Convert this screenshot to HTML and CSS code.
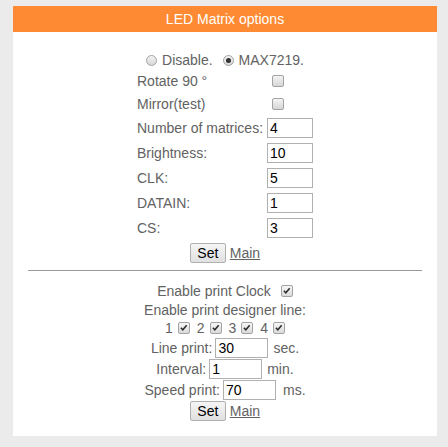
FILE: index.html
```html
<!DOCTYPE html>
<html>
<head>
<meta charset="utf-8">
<link rel="stylesheet" href="styles.css">
</head>
<body>
<div class="card">
  <div class="head">LED Matrix options</div>
  <div class="radios">
    <span class="radio"></span><span class="rtext">Disable.</span>
    <span class="radio on"></span><span class="rtext">MAX7219.</span>
  </div>
  <div class="grid">
    <span class="lbl">Rotate 90 °</span><span class="cell"><span class="cbx"></span></span>
    <span class="lbl">Mirror(test)</span><span class="cell"><span class="cbx"></span></span>
    <span class="lbl">Number of matrices:</span><span class="cell"><span class="inp">4</span></span>
    <span class="lbl">Brightness:</span><span class="cell"><span class="inp">10</span></span>
    <span class="lbl">CLK:</span><span class="cell"><span class="inp">5</span></span>
    <span class="lbl">DATAIN:</span><span class="cell"><span class="inp">1</span></span>
    <span class="lbl">CS:</span><span class="cell"><span class="inp">3</span></span>
  </div>
  <div class="actions first">
    <span class="btn">Set</span><a class="link">Main</a>
  </div>
  <div class="rule"></div>
  <div class="sec2">
    <div class="line t19">Enable print Clock<span class="cbx on gap10"><svg viewBox="0 0 12 12" width="10" height="10"><path d="M2.2 5.8 L4.6 8.2 L9.2 2.8" fill="none" stroke="#2b2b2b" stroke-width="1.8"/></svg></span></div>
    <div class="line t19">Enable print designer line:</div>
    <div class="line t18 nums">
      <span class="num">1</span><span class="cbx on"><svg viewBox="0 0 12 12" width="10" height="10"><path d="M2.2 5.8 L4.6 8.2 L9.2 2.8" fill="none" stroke="#2b2b2b" stroke-width="1.8"/></svg></span>
      <span class="num">2</span><span class="cbx on"><svg viewBox="0 0 12 12" width="10" height="10"><path d="M2.2 5.8 L4.6 8.2 L9.2 2.8" fill="none" stroke="#2b2b2b" stroke-width="1.8"/></svg></span>
      <span class="num">3</span><span class="cbx on"><svg viewBox="0 0 12 12" width="10" height="10"><path d="M2.2 5.8 L4.6 8.2 L9.2 2.8" fill="none" stroke="#2b2b2b" stroke-width="1.8"/></svg></span>
      <span class="num">4</span><span class="cbx on"><svg viewBox="0 0 12 12" width="10" height="10"><path d="M2.2 5.8 L4.6 8.2 L9.2 2.8" fill="none" stroke="#2b2b2b" stroke-width="1.8"/></svg></span>
    </div>
    <div class="line t21 field"><span>Line print:</span><span class="inp wide">30</span><span class="unit">sec.</span></div>
    <div class="line t21 field"><span>Interval:</span><span class="inp wide">1</span><span class="unit">min.</span></div>
    <div class="line t21 field"><span>Speed print:</span><span class="inp wide">70</span><span class="unit ms">ms.</span></div>
    <div class="actions second">
      <span class="btn">Set</span><a class="link">Main</a>
    </div>
  </div>
</div>
</body>
</html>
```

FILE: styles.css
```css
* { box-sizing: border-box; }
html, body {
  margin: 0;
  padding: 0;
  background: #ebebeb;
}
body {
  padding: 6px 11px 0 13px;
  font-family: "Liberation Sans", Arial, sans-serif;
  font-size: 14px;
  color: #626262;
}
.card {
  background: #fff;
  width: 424px;
  height: 430px;
}
.head {
  background: #fe8a33;
  color: #fff;
  height: 26px;
  line-height: 26px;
  text-align: center;
}
.radios {
  margin-top: 19px;
  height: 18px;
  display: flex;
  align-items: center;
  justify-content: center;
}
.radio {
  width: 11px;
  height: 11px;
  border-radius: 50%;
  border: 1px solid #a3a3a3;
  background: linear-gradient(#f2f2f2, #d8d8d8);
  display: inline-flex;
  align-items: center;
  justify-content: center;
}
.radio.on::after {
  content: "";
  width: 5px;
  height: 5px;
  border-radius: 50%;
  background: #333;
}
.rtext { margin-left: 5px; margin-right: 10px; }
.rtext:last-child { margin-right: 0; }

.grid {
  display: grid;
  grid-template-columns: 130px 46px;
  grid-template-rows: 23px 23px repeat(5, 25px);
  justify-content: center;
  align-items: center;
}
.cell { display: flex; align-items: center; }
.cbx {
  width: 12px;
  height: 12px;
  border: 1px solid #a3a3a3;
  border-radius: 2px;
  background: linear-gradient(#f4f4f4, #d6d6d6);
  display: inline-flex;
  align-items: center;
  justify-content: center;
}
.cell .cbx { margin-left: 5px; }
.cbx.on { background: linear-gradient(#f6f6f6, #dadada); }
.cbx svg { display: block; }
.inp {
  display: flex;
  align-items: center;
  width: 46px;
  height: 20px;
  border: 1px solid #b0b0b0;
  background: #fff;
  color: #000;
  padding-left: 2px;
}
.inp.wide { width: 53px; }

.actions {
  display: flex;
  justify-content: center;
  align-items: center;
  gap: 4px;
  height: 20px;
}
.actions.first { margin-top: 3px; }
.actions.second { margin-top: 1px; }
.btn {
  width: 36px;
  height: 20px;
  display: flex;
  align-items: center;
  justify-content: center;
  color: #000;
  border: 1px solid #b0b0b0;
  border-radius: 2px;
  background: linear-gradient(#f5f5f5, #e0e0e0);
}
.link {
  color: #626262;
  text-decoration: underline;
}
.rule {
  margin: 7px 15px 0;
  height: 1px;
  background: #9a9a9a;
}
.sec2 { padding-top: 10px; }
.line {
  display: flex;
  align-items: center;
  justify-content: center;
}
.t19 { height: 19px; }
.t18 { height: 18px; }
.t21 { height: 21px; }
.gap10 { margin-left: 10px; }
.nums .num { margin-right: 5px; }
.nums .cbx { margin-right: 7px; }
.nums .cbx:last-child { margin-right: 0; }
.field .inp { margin-left: 3px; margin-right: 5px; }
.field .unit.ms { margin-left: 2px; }
```
